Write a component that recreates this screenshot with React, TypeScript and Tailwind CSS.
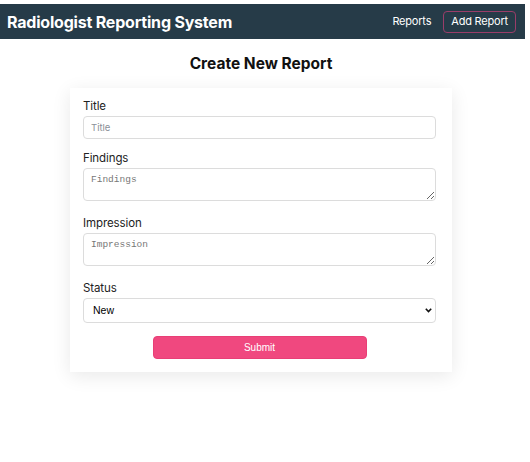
export default function App() {
  const sans = "font-['Inter','Noto_Sans',sans-serif]";
  const label = "block text-[11.5px] text-[#222] leading-[19px] tracking-[-0.1px]";
  const area =
    "block w-full h-[33px] border border-[#dcdcdc] rounded-[4px] px-[7px] pt-[4px] text-[9.5px] font-['Liberation_Mono',monospace] placeholder:text-[#777] outline-none";
  return (
    <div className={`min-h-[462px] bg-white pt-1 pr-[5px] ${sans}`}>
      {/* Navbar */}
      <header className="h-[35px] bg-[#263b48] flex items-center justify-between pl-[7px] pr-[9px]">
        <h1 className="text-white font-bold text-[16px] tracking-[-0.2px]">Radiologist Reporting System</h1>
        <nav className="flex items-center gap-3">
          <a className="text-white text-[11px] tracking-[-0.2px]">Reports</a>
          <a className="text-white text-[11px] tracking-[-0.2px] border border-[#9a3d69] rounded-[4px] px-[7px] h-[22px] flex items-center">
            Add Report
          </a>
        </nav>
      </header>

      <main className="flex flex-col items-center pr-[3px]">
        <h2 className="mt-[13px] text-[15.5px] font-bold text-[#111] leading-[24px]">Create New Report</h2>

        <form className="mt-[12px] w-[382px] bg-white shadow-[0_4px_18px_rgba(0,0,0,0.09)] pl-[13px] pr-4 pt-[9px] pb-[13px]">
          <label className={label}>Title</label>
          <input
            placeholder="Title"
            className="block w-full h-[23px] border border-[#dcdcdc] rounded-[4px] px-[7px] text-[9.5px] placeholder:text-[#8a8f98] outline-none"
          />

          <label className={`${label} mt-[10px]`}>Findings</label>
          <textarea placeholder="Findings" className={area} />

          <label className={`${label} mt-[13px]`}>Impression</label>
          <textarea placeholder="Impression" className={area} />

          <label className={`${label} mt-[13px]`}>Status</label>
          <div className="relative">
            <select className="block w-full h-[25px] appearance-none border border-[#dcdcdc] rounded-[4px] px-[9px] text-[10.5px] text-black font-['Liberation_Sans',Arial,sans-serif] bg-white outline-none">
              <option>New</option>
              <option>In Progress</option>
              <option>Completed</option>
            </select>
            <svg
              className="pointer-events-none absolute right-[4px] top-[10px]"
              width="7"
              height="5"
              viewBox="0 0 7 5"
            >
              <path d="M0.8 0.8 L3.5 3.6 L6.2 0.8" fill="none" stroke="#111" strokeWidth="1.6" />
            </svg>
          </div>

          <div className="flex justify-center mt-[13px]">
            <button
              type="button"
              className="w-[214px] h-[23px] bg-[#f0487f] border border-[#e83f76] rounded-[4px] text-white text-[10px] font-['Liberation_Sans',Arial,sans-serif]"
            >
              Submit
            </button>
          </div>
        </form>
      </main>
    </div>
  );
}
